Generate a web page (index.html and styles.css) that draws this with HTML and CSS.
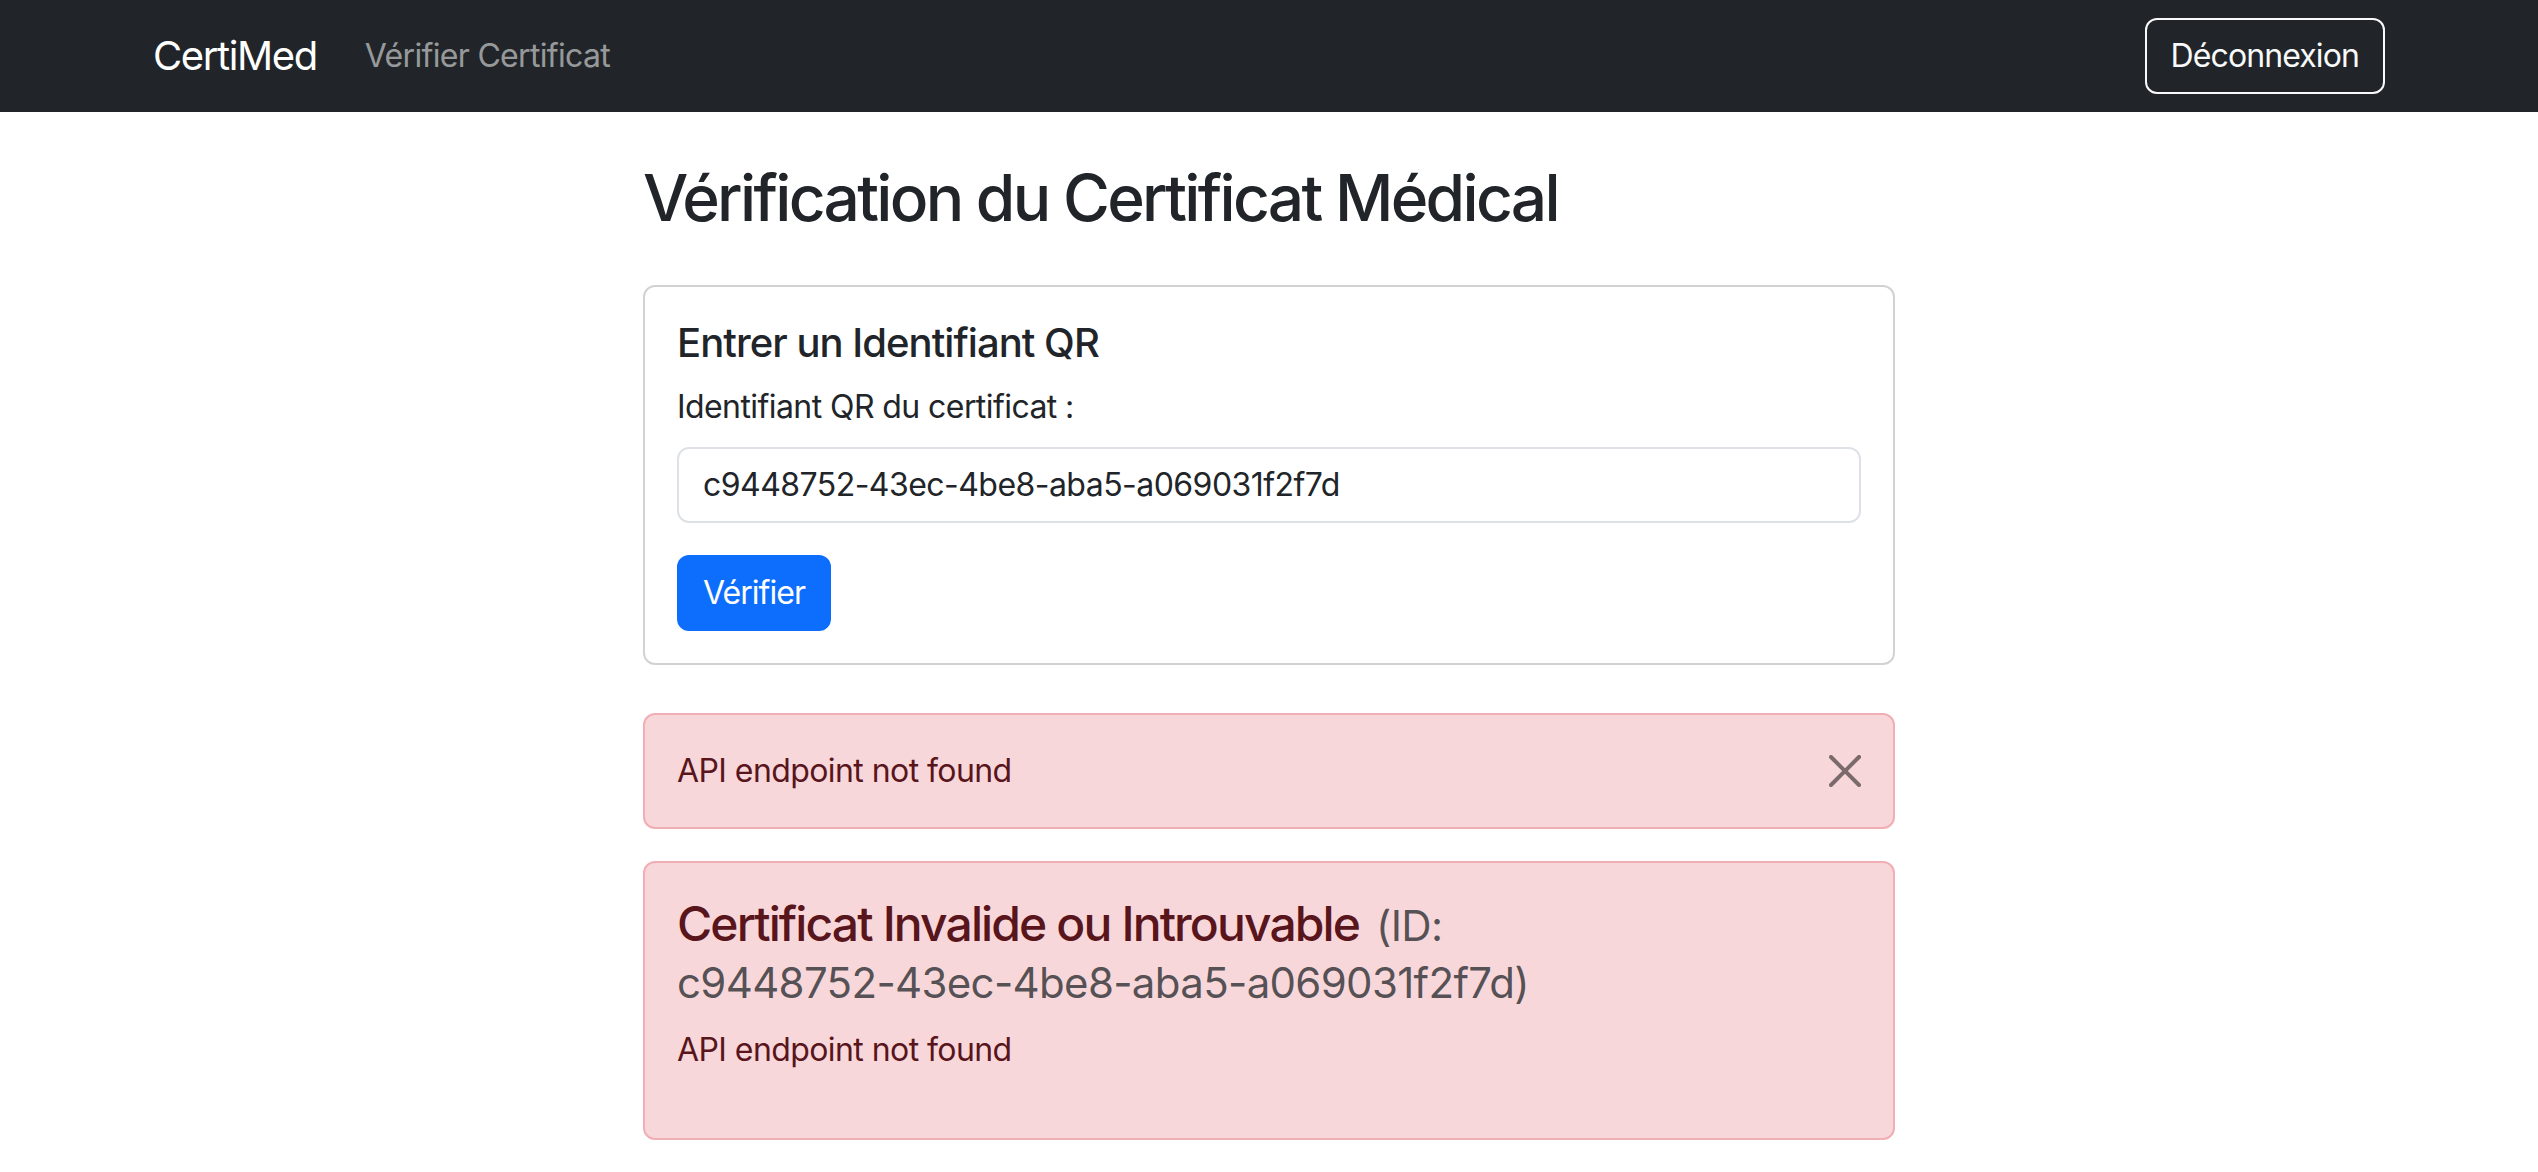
FILE: index.html
```html
<!DOCTYPE html>
<html lang="fr">
<head>
<meta charset="utf-8">
<title>CertiMed</title>
<link rel="stylesheet" href="styles.css">
</head>
<body>
<nav class="navbar">
  <div class="nav-inner">
    <div class="nav-left">
      <a class="brand" href="#">CertiMed</a>
      <a class="nav-link" href="#">Vérifier Certificat</a>
    </div>
    <button class="btn-outline-light">Déconnexion</button>
  </div>
</nav>
<main class="container">
  <h2 class="page-title">Vérification du Certificat Médical</h2>
  <div class="card">
    <div class="card-body">
      <h5 class="card-title">Entrer un Identifiant QR</h5>
      <label class="form-label" for="qr">Identifiant QR du certificat :</label>
      <input class="form-control" id="qr" type="text" value="c9448752-43ec-4be8-aba5-a069031f2f7d">
      <button class="btn-primary">Vérifier</button>
    </div>
  </div>
  <div class="alert alert-dismissible">
    API endpoint not found
    <button class="btn-close" aria-label="Close">
      <svg viewBox="0 0 16 16" width="32" height="32"><path d="M.293.293a1 1 0 0 1 1.414 0L8 6.586 14.293.293a1 1 0 1 1 1.414 1.414L9.414 8l6.293 6.293a1 1 0 0 1-1.414 1.414L8 9.414l-6.293 6.293a1 1 0 0 1-1.414-1.414L6.586 8 .293 1.707a1 1 0 0 1 0-1.414z" fill="#000"/></svg>
    </button>
  </div>
  <div class="alert">
    <h4 class="alert-heading">Certificat Invalide ou Introuvable <small class="text-muted">(ID: <span class="nowrap">c9448752-43ec-4be8-aba5-a069031f2f7d)</span></small></h4>
    <p class="alert-text">API endpoint not found</p>
  </div>
</main>
</body>
</html>
```
FILE: styles.css
```css
* { box-sizing: border-box; }
html, body { margin: 0; padding: 0; }
body {
  font-family: Inter, "Noto Sans", "Liberation Sans", sans-serif;
  font-size: 32px;
  line-height: 1.5;
  letter-spacing: -0.018em;
  color: #212529;
  background: #fff;
}
.navbar {
  background: #212529;
  padding: 16px 0;
}
.nav-inner {
  max-width: 2280px;
  margin: 0 auto;
  padding: 0 24px;
  display: flex;
  align-items: center;
  justify-content: space-between;
}
.nav-left { display: flex; align-items: center; }
.brand {
  color: #fff;
  text-decoration: none;
  font-size: 40px;
  line-height: 60px;
  letter-spacing: -0.035em;
  padding: 10px 0;
  margin-right: 32px;
}
.nav-link {
  color: rgba(255,255,255,0.55);
  text-decoration: none;
  font-size: 32px;
  letter-spacing: -0.021em;
  padding: 16px;
  line-height: 48px;
}
.btn-outline-light {
  font-family: inherit;
  font-size: 32px;
  line-height: 48px;
  letter-spacing: -0.028em;
  color: #f8f9fa;
  background: transparent;
  border: 2px solid #f8f9fa;
  border-radius: 12px;
  padding: 12px 24px;
}
.container {
  max-width: 1300px;
  margin: 48px auto 0;
  padding: 0 24px;
}
.page-title {
  font-size: 64px;
  font-weight: 500;
  line-height: 1.2;
  letter-spacing: -0.042em;
  margin: 0 0 48px;
}
.card {
  border: 2px solid rgba(0,0,0,0.175);
  border-radius: 12px;
}
.card-body { padding: 32px; }
.card-title {
  font-size: 40px;
  font-weight: 500;
  line-height: 1.2;
  letter-spacing: -0.024em;
  margin: 0 0 16px;
}
.form-label {
  display: block;
  margin-bottom: 16px;
}
.form-control {
  display: block;
  width: 100%;
  font-family: inherit;
  font-size: 32px;
  line-height: 48px;
  letter-spacing: -0.017em;
  color: #212529;
  padding: 12px 24px;
  border: 2px solid #dee2e6;
  border-radius: 12px;
  margin-bottom: 32px;
}
.btn-primary {
  font-family: inherit;
  font-size: 32px;
  line-height: 48px;
  letter-spacing: -0.03em;
  color: #fff;
  background: #0d6efd;
  border: 2px solid #0d6efd;
  border-radius: 12px;
  padding: 12px 24px;
}
.alert {
  position: relative;
  margin-top: 48px;
  margin-bottom: 32px;
  padding: 32px;
  background: #f8d7da;
  border: 2px solid #f1aeb5;
  border-radius: 12px;
  color: #58151c;
}
.alert + .alert { margin-top: 0; }
.alert-dismissible { padding-right: 96px; }
.btn-close {
  position: absolute;
  top: 0;
  right: 0;
  padding: 40px 32px;
  background: transparent;
  border: 0;
  opacity: 0.5;
  line-height: 0;
}
.btn-close svg { display: block; width: 32px; height: 32px; }
.alert-heading {
  font-size: 48px;
  font-weight: 500;
  line-height: 1.2;
  letter-spacing: -0.039em;
  margin: 0 0 16px;
  color: inherit;
}
.text-muted {
  font-size: 0.875em;
  color: rgba(33,37,41,0.75);
  font-weight: 400;
  letter-spacing: -0.016em;
  margin-left: 6px;
}
.nowrap { white-space: nowrap; }
.alert-text { margin: 0 0 32px; }
```
